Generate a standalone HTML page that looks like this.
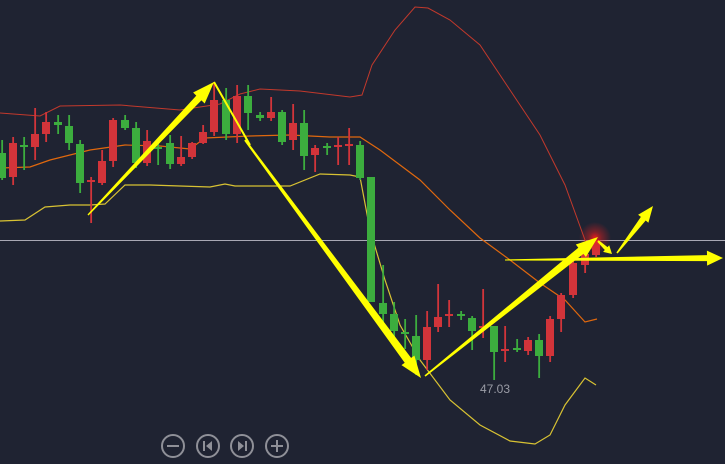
<!DOCTYPE html>
<html><head><meta charset="utf-8"><style>
html,body{margin:0;padding:0;background:#1f2332;width:725px;height:464px;overflow:hidden;font-family:"Liberation Sans",sans-serif}
svg{display:block}
</style></head><body>
<svg id="s" width="725" height="464" viewBox="0 0 725 464" xmlns="http://www.w3.org/2000/svg">
<defs><radialGradient id="g"><stop offset="0" stop-color="#ff1a1a" stop-opacity="0.9"/><stop offset="0.4" stop-color="#e02020" stop-opacity="0.45"/><stop offset="1" stop-color="#e02020" stop-opacity="0"/></radialGradient></defs>
<rect width="725" height="464" fill="#1f2332"/>
<line x1="0" y1="240.5" x2="725" y2="240.5" stroke="#a8a8b4" stroke-width="1"/>
<polyline fill="none" stroke="#c2392c" stroke-width="1" points="0,113 40,116 60,106 120,105 180,110 220,104 240,94 260,89 300,91 350,97 362,95 372,65 395,30 415,7 428,8 450,20 480,45 510,90 540,135 565,185 585,240 595,252"/>
<polyline fill="none" stroke="#e0680e" stroke-width="1.2" points="0,168 30,167 50,160 90,150 125,145 160,146 190,149 205,138 250,136 290,135 330,137 360,137 380,150 420,180 450,210 480,238 510,260 540,283 565,300 585,322 597,319"/>
<polyline fill="none" stroke="#d8c233" stroke-width="1.2" points="0,221 25,220 45,207 70,205 90,205 105,204 125,185 150,185 180,186 210,187 225,184 235,186 290,186 320,174 350,175 360,177 370,230 385,280 400,325 420,360 450,400 480,425 510,441 535,444 550,435 565,405 585,378 596,385"/>
<g id="c"></g>
<circle cx="595" cy="238" r="16" fill="url(#g)"/>
<g id="a" fill="#ffff00"></g>
<line x1="214" y1="82" x2="250" y2="145" stroke="#ffff00" stroke-width="2"/>
<text x="480" y="393" fill="#9a9ca6" font-size="12">47.03</text>
<g fill="none" stroke="#8f9098" stroke-width="2">
<circle cx="173" cy="446" r="11"/><circle cx="208" cy="446" r="11"/><circle cx="242" cy="446" r="11"/><circle cx="277" cy="446" r="11"/>
<line x1="167" y1="446" x2="179" y2="446"/>
<line x1="271" y1="446" x2="283" y2="446"/><line x1="277" y1="440" x2="277" y2="452"/>
<line x1="204" y1="441" x2="204" y2="451"/><line x1="246" y1="441" x2="246" y2="451"/>
</g>
<polygon points="212,441 212,451 206,446" fill="#8f9098"/>
<polygon points="238,441 238,451 244,446" fill="#8f9098"/>
</svg>
<script>
var R="#d2343a",G="#3cad3e";
var C=[[2,G,153,178,140,180],[13,R,143,177,137,185],[24,G,145,147,137,170],[35,R,134,147,108,160],[46,R,122,134,112,142],[58,G,122,125,115,134],[69,G,126,143,115,150],[80,G,144,183,140,193],[91,R,180,182,177,223],[102,R,161,183,150,185],[113,R,120,161,118,167],[125,G,120,128,115,130],[136,G,128,163,122,168],[147,R,141,163,130,166],[158,G,147,149,140,165],[170,G,143,164,135,169],[181,R,157,164,136,166],[192,R,143,157,142,159],[203,R,132,143,125,144],[214,R,100,132,82,136],[226,G,100,134,88,140],[237,R,96,134,85,143],[248,G,96,113,85,130],[260,G,115,118,112,121],[271,R,112,118,97,121],[282,G,112,142,110,145],[293,R,123,140,104,150],[304,G,123,156,110,170],[315,R,148,155,145,172],[327,G,146,148,143,155],[338,R,145,147,137,165],[349,R,144,146,128,165],[360,G,145,178,141,180],[371,G,177,302,177,302],[383,G,303,314,265,330],[394,G,314,331,302,345],[405,G,332,334,319,349],[416,G,336,360,315,375],[427,R,327,360,311,370],[438,R,317,327,284,332],[449,R,314,316,300,327],[461,G,314,316,311,320],[472,G,318,331,316,350],[483,R,326,328,289,338],[494,G,326,352,326,380],[505,R,349,351,326,362],[517,G,348,350,339,352],[528,R,340,351,337,355],[539,G,340,356,334,378],[550,R,319,356,316,362],[561,R,295,319,293,332],[573,R,263,295,258,298],[585,R,254,265,250,273],[596,R,240,255,238,257]];
var h="";C.forEach(function(c){h+='<rect x="'+(c[0]-0.75)+'" y="'+c[4]+'" width="1.8" height="'+(c[5]-c[4])+'" fill="'+c[1]+'"/>';h+='<rect x="'+(c[0]-4)+'" y="'+c[2]+'" width="8" height="'+Math.max(2,c[3]-c[2])+'" fill="'+c[1]+'"/>';});
document.getElementById("c").innerHTML=h;
function A(x1,y1,x2,y2,w0,w1,L,H){var dx=x2-x1,dy=y2-y1,d=Math.hypot(dx,dy),ux=dx/d,uy=dy/d,nx=-uy,ny=ux;var bx=x2-ux*L,by=y2-uy*L;var p=[[x1+nx*w0/2,y1+ny*w0/2],[bx+nx*w1/2,by+ny*w1/2],[bx+nx*H/2,by+ny*H/2],[x2,y2],[bx-nx*H/2,by-ny*H/2],[bx-nx*w1/2,by-ny*w1/2],[x1-nx*w0/2,y1-ny*w0/2]];return '<polygon points="'+p.map(function(q){return q[0].toFixed(1)+","+q[1].toFixed(1)}).join(" ")+'"/>';}
var a="";
a+=A(88,215,214,82,1.5,7,22,16);
a+=A(245,140,421,378,2,8,22,16);
a+=A(425,376,598,237,1.5,8,22,16);
a+=A(505,260,723,258,1,6,16,15);
a+=A(617,253,653,206,1.5,6,16,13);
a+=A(598,241,612,254,2,4,8,9);
document.getElementById("a").innerHTML=a;
</script>
</body></html>
